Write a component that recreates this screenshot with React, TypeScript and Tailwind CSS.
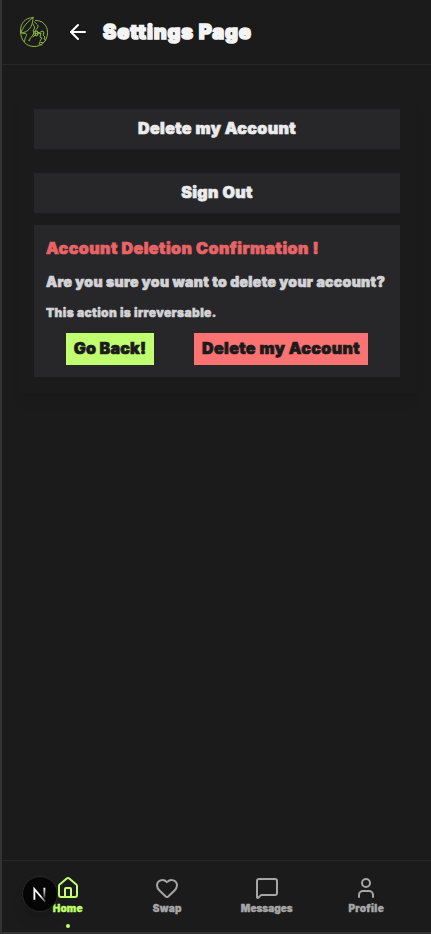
import { ArrowLeft, Heart, House, MessageSquare, User } from "lucide-react";

const navItems = [
  { label: "Home", Icon: House, active: true, text: "tracking-[0.15px]" },
  { label: "Swap", Icon: Heart, active: false, text: "tracking-[0.3px]" },
  { label: "Messages", Icon: MessageSquare, active: false, text: "tracking-[0px]" },
  { label: "Profile", Icon: User, active: false, text: "tracking-[0.35px]" },
];

function GlobeLogo() {
  return (
    <svg viewBox="0 0 30 32" className="h-8 w-[30px]" fill="none" stroke="#8ab53e" strokeWidth="1" strokeLinecap="round" strokeLinejoin="round">
      <path d="M14 1.500C6 2 1.500 7 1.500 15c0 9 5.500 15.500 13.500 15.500 8 0 13.500-6 13.500-14C28.500 9 23 4 16.500 4.500" />
      <path d="M14 1.500C8 7 5 9 2 16.500c4 .5 8-2 10-6 1.500-3 2-6 2-9M2 16.500c0 1 2 1.500 4 1 2 0 2 1.500 1 3s-1 3-1.500 5" />
      <path d="M15.500 6c2 1 1.500 2 3 3s0 3-1 4-2 2-1 3.500M14 8c0 2 2 2 1.500 4s-2 2-1 4" />
      <path d="M11 24c-1 2-1.500 1-1 0l4-5 1-3 3-1 2 2 3-2 2 1-1 3 2 2-1 2 2 1-3 3-3-1-1 2 3 1M15 19l3 1 1-2-4-1m3-2 1 3 3-1-1 4 2 1-2 3m-4-7-3 3" />
    </svg>
  );
}

function NextBadge() {
  return (
    <div className="absolute bottom-5 left-5 flex size-9 items-center justify-center rounded-full border border-[#292929] bg-[#050505] shadow-lg">
      <svg viewBox="0 0 16 16" className="size-5" fill="none" strokeWidth="1.5">
        <defs>
          <linearGradient id="diagonal" x1="3" y1="2" x2="13" y2="15" gradientUnits="userSpaceOnUse">
            <stop offset="0.55" stopColor="#fff" />
            <stop offset="1" stopColor="#fff" stopOpacity="0.15" />
          </linearGradient>
          <linearGradient id="stem" x1="0" y1="3" x2="0" y2="12" gradientUnits="userSpaceOnUse">
            <stop stopColor="#fff" />
            <stop offset="1" stopColor="#fff" stopOpacity="0.1" />
          </linearGradient>
        </defs>
        <path d="M3.500 12.500V4L12 14" stroke="url(#diagonal)" />
        <path d="M11.500 3v8" stroke="url(#stem)" />
      </svg>
    </div>
  );
}

export default function App() {
  return (
    <div className="relative flex h-[934px] w-[431px] flex-col overflow-hidden border-b-2 border-l-2 border-[#333333] bg-[#1b1b1b] font-['Inter',sans-serif] font-black text-[#ececee] [-webkit-text-stroke:0.7px_currentColor]">
      <header className="flex h-[65px] shrink-0 items-center border-b border-[#272727] pl-[17px]">
        <GlobeLogo />
        <ArrowLeft className="ml-[17px] size-6 text-white" />
        <h1 className="ml-3 whitespace-nowrap pl-px text-xl leading-7 tracking-[0.85px] text-[#f4f4f5] [-webkit-text-stroke:1.5px_currentColor]">Settings Page</h1>
      </header>

      <main className="flex-1 py-7 pl-4 pr-[15px]">
        <section className="flex flex-col p-4 shadow-lg shadow-black/5">
          <button className="flex h-10 items-center justify-center whitespace-nowrap bg-[#27272a] pb-0.5 text-base tracking-[0.38px]">Delete my Account</button>
          <button className="mt-6 flex h-10 items-center justify-center whitespace-nowrap bg-[#27272a] pb-0.5 text-base tracking-[0.38px]">Sign Out</button>
          <div className="mt-3 h-[152px] whitespace-nowrap bg-[#27272a] px-3 pt-[11px]">
            <h2 className="text-base leading-6 tracking-[0.47px] text-[#e76467]">Account Deletion Confirmation !</h2>
            <p className="mt-3 text-sm leading-5 tracking-[0.33px] text-[#d3d3d6]">Are you sure you want to delete your account?</p>
            <p className="mt-[13px] text-xs leading-4 tracking-[0.37px] text-[#d3d3d6] [-webkit-text-stroke:0.5px_currentColor]">This action is irreversable.</p>
            <div className="mt-3 flex gap-10 pl-5 text-base tracking-[0.38px] text-[#1b1b1b]">
              <button className="h-8 w-[88px] bg-[#bfff70] pb-0.5 tracking-[0.2px]">Go Back!</button>
              <button className="h-8 w-[174px] bg-[#fb7272] pb-0.5">Delete my Account</button>
            </div>
          </div>
        </section>
      </main>

      <nav className="grid h-[72px] w-[430px] shrink-0 grid-cols-4 border-t border-[#272727] px-4 [-webkit-text-stroke:0.4px_currentColor]">
        {navItems.map(({ label, Icon, active, text }) => (
          <a key={label} className={`flex flex-col items-center pt-[15px] ${active ? "text-[#bfff70]" : "text-[#a6a6a6]"}`}>
            <Icon className="size-6" />
            <span className={`mt-0.5 text-[10px] leading-3 ${text}`}>{label}</span>
            {active && <span className="mt-[10px] size-1 rounded-full bg-[#bfff70]" />}
          </a>
        ))}
      </nav>
      <NextBadge />
    </div>
  );
}
